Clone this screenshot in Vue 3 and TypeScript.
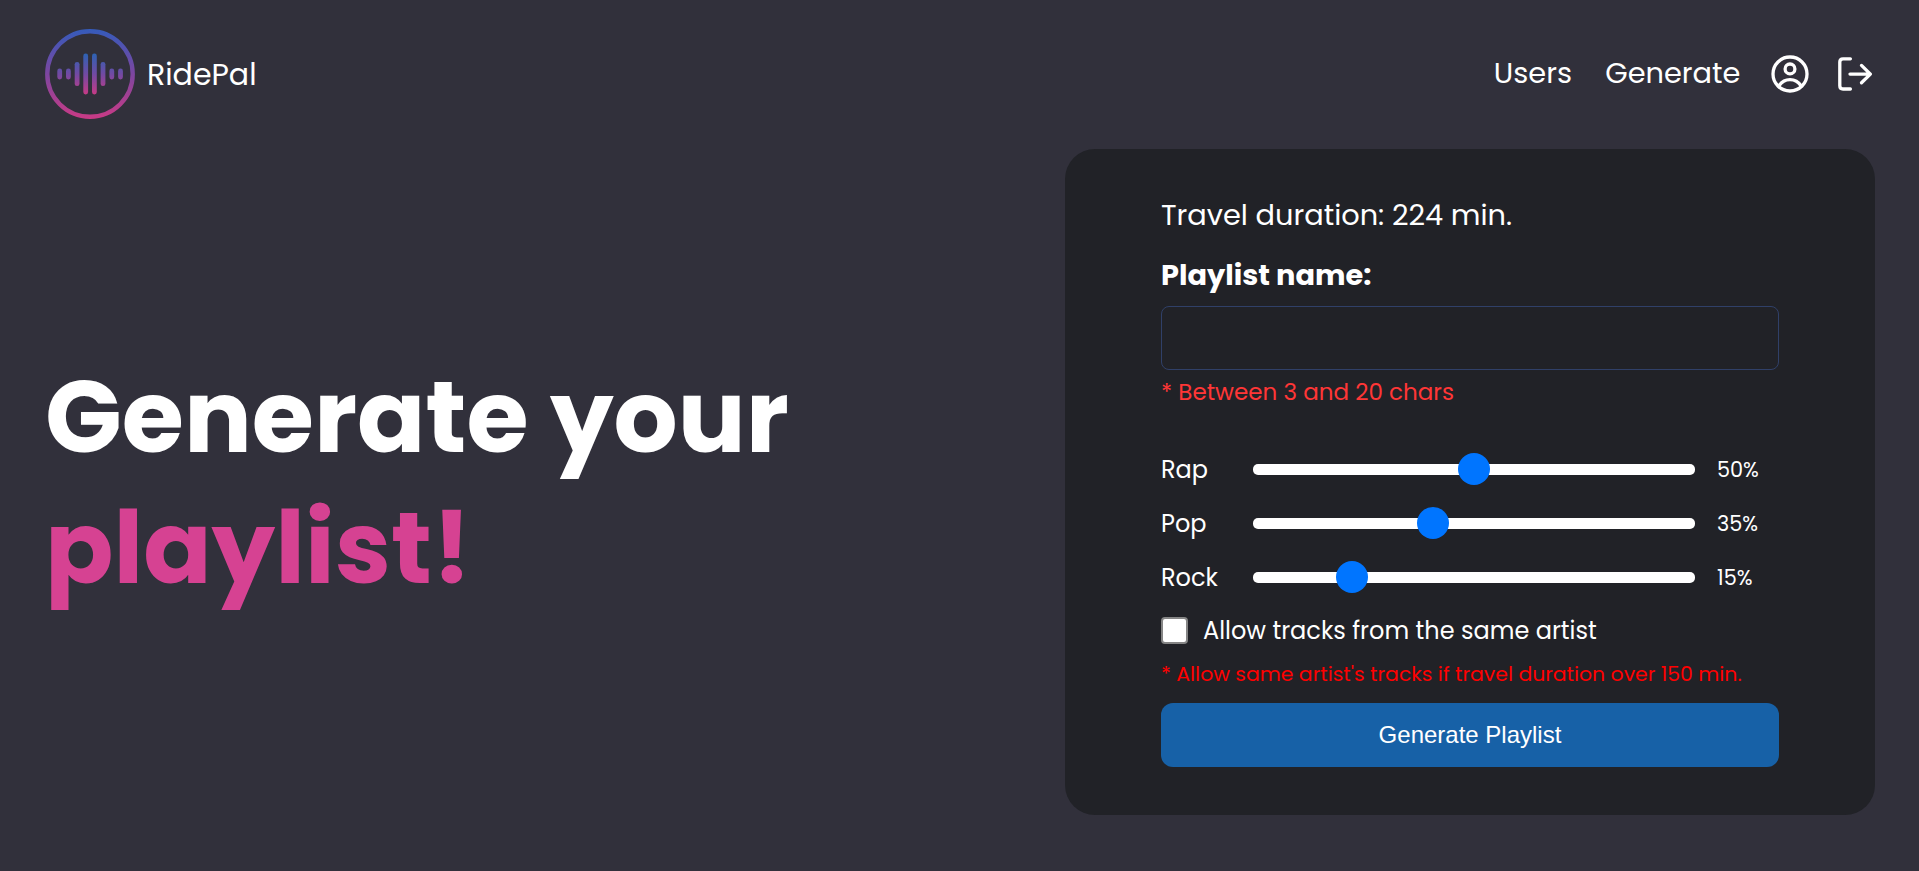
<script setup lang="ts">
import { ref } from 'vue'

interface Genre {
  id: string
  name: string
  share: number
  position: number
}

const duration = 224
const durationLimit = 150
const playlistName = ref('')
const allowSameArtist = ref(false)

const genres = ref<Genre[]>([
  { id: 'rap', name: 'Rap', share: 50, position: 50 },
  { id: 'pop', name: 'Pop', share: 35, position: 40.1 },
  { id: 'rock', name: 'Rock', share: 15, position: 20.15 },
])

const waveBars = [
  { x: 14.7, h: 5.4 },
  { x: 23.4, h: 5.4 },
  { x: 32.1, h: 12 },
  { x: 40.7, h: 20.4 },
  { x: 49.4, h: 20.4 },
  { x: 58, h: 12 },
  { x: 66.8, h: 5.4 },
  { x: 75.5, h: 5.4 },
]
</script>

<template>
  <div class="page">
    <header class="header">
      <div class="brand">
        <svg class="logo" viewBox="0 0 90 90">
          <defs>
            <linearGradient id="ring" gradientUnits="userSpaceOnUse" x1="0" y1="0" x2="0" y2="90">
              <stop offset="0" stop-color="#355bbb" />
              <stop offset="0.5" stop-color="#7d46a0" />
              <stop offset="1" stop-color="#c93a85" />
            </linearGradient>
            <linearGradient id="wave" gradientUnits="userSpaceOnUse" x1="0" y1="24" x2="0" y2="66">
              <stop offset="0" stop-color="#2a63b4" />
              <stop offset="0.5" stop-color="#714aa3" />
              <stop offset="1" stop-color="#c93a85" />
            </linearGradient>
          </defs>
          <circle cx="45" cy="45" r="42.7" fill="none" stroke="url(#ring)" stroke-width="4.4" />
          <rect
            v-for="bar in waveBars"
            :key="bar.x"
            :x="bar.x - 2.4"
            :y="45 - bar.h"
            width="4.8"
            :height="bar.h * 2"
            rx="2.3"
            fill="url(#wave)"
          />
        </svg>
        <span class="brand-name">RidePal</span>
      </div>
      <nav class="nav">
        <a class="link users">Users</a>
        <a class="link generate">Generate</a>
        <svg class="icon profile" viewBox="0 0 38 38">
          <circle cx="19" cy="19" r="17" />
          <circle cx="19" cy="13.9" r="4.9" />
          <path d="M7.8 31 C10.6 26.6 14.6 24.6 19 24.6 S27.4 26.6 30.2 31" />
        </svg>
        <svg class="icon logout" viewBox="0 0 36 36">
          <path d="M13.4 2.8 H6 Q2.8 2.8 2.8 6 V29.8 Q2.8 33 6 33 H13.4" />
          <path d="M13 18.1 H33.4 M24.5 9.4 L33.4 18.1 L24.5 26.8" />
        </svg>
      </nav>
    </header>

    <main class="main">
      <h1 class="title">
        <span>Generate your</span>
        <span class="title-accent">playlist!</span>
      </h1>

      <form class="card" @submit.prevent>
        <p class="duration">Travel duration: {{ duration }} min.</p>
        <label class="name-label" for="name">Playlist name:</label>
        <input id="name" v-model="playlistName" class="name-input" type="text" />
        <p class="name-hint">* Between 3 and 20 chars</p>

        <div class="genres">
          <div v-for="genre in genres" :key="genre.id" class="genre">
            <span class="genre-name">{{ genre.name }}</span>
            <input v-model.number="genre.position" class="slider" type="range" min="0" max="100" step="any" />
            <span class="share">{{ genre.share }}%</span>
          </div>
        </div>

        <label class="allow">
          <input v-model="allowSameArtist" class="check" type="checkbox" />
          <span class="allow-text">Allow tracks from the same artist</span>
        </label>
        <p class="allow-hint">* Allow same artist's tracks if travel duration over {{ durationLimit }} min.</p>
        <button class="submit" type="submit">Generate Playlist</button>
      </form>
    </main>
  </div>
</template>

<style>
body {
  margin: 0;
  background: #31303b;
}
</style>

<style scoped>
.page {
  box-sizing: border-box;
  width: 100%;
  height: 871px;
  overflow: hidden;
  padding: 0 44px 0 45px;
  background: #31303b;
  color: #fff;
  font-family: Poppins, Inter, 'Noto Sans', sans-serif;
  font-size: 28.8px;
}

.header {
  display: flex;
  justify-content: space-between;
  align-items: center;
  height: 148px;
  margin-bottom: 1px;
}

.brand {
  display: flex;
  align-items: center;
}

.logo {
  width: 90px;
  height: 90px;
}

.brand-name {
  margin-left: 12px;
  padding-top: 1px;
  font-size: 30px;
  line-height: 44px;
}

.nav {
  display: flex;
  align-items: center;
}

.link {
  padding-bottom: 2px;
  line-height: 44px;
}

.generate {
  margin-left: 33.4px;
}

.icon {
  fill: none;
  stroke: #fff;
  stroke-width: 3.3;
  stroke-linecap: round;
  stroke-linejoin: round;
}

.profile {
  width: 38px;
  height: 38px;
  margin-left: 31px;
}

.logout {
  width: 36px;
  height: 36px;
  margin: 0 1.8px 0 27.8px;
}

.main {
  display: flex;
  justify-content: space-between;
  align-items: center;
}

.title {
  display: flex;
  flex-direction: column;
  margin: 0;
  font-size: 100.8px;
  font-weight: 700;
  line-height: 131px;
  white-space: nowrap;
}

.title-accent {
  color: #d64292;
}

.card {
  box-sizing: border-box;
  display: flex;
  flex-direction: column;
  width: 810px;
  height: 666px;
  padding: 44px 96px 48px;
  border-radius: 30px;
  background: #212227;
}

.duration {
  margin: 0;
  line-height: 44px;
}

.name-label {
  margin-top: 16px;
  line-height: 44px;
  font-weight: 700;
}

.name-input {
  box-sizing: border-box;
  height: 64px;
  margin: 9px 0 0;
  padding: 0 16px;
  border: 1px solid #304068;
  border-radius: 8px;
  outline: none;
  background: transparent;
  color: #fff;
  font: inherit;
}

.name-hint {
  margin: 4px 0 0;
  line-height: 36px;
  font-size: 23.04px;
  color: #ff3636;
}

.genres {
  margin-top: 32.6px;
}

.genre {
  display: flex;
  align-items: center;
  height: 53.8px;
}

.genre-name {
  width: 92px;
  font-size: 24px;
}

.slider {
  appearance: none;
  width: 442px;
  height: 11px;
  margin: 0;
  border-radius: 5px;
  outline: none;
  background: #fff;
}

.slider::-webkit-slider-thumb {
  appearance: none;
  width: 32px;
  height: 32px;
  border: 0;
  border-radius: 50%;
  background: #0075ff;
}

.share {
  margin-left: 22px;
  font-size: 20.8px;
}

.allow {
  display: flex;
  align-items: center;
  height: 40px;
  margin-top: 6.4px;
}

.check {
  appearance: none;
  box-sizing: border-box;
  width: 27px;
  height: 27px;
  margin: 0;
  border: 2px solid #858585;
  border-radius: 4px;
  background: #fff;
}

.allow-text {
  margin-left: 15px;
  font-size: 24px;
}

.allow-hint {
  margin: 7.5px 0 0;
  line-height: 32px;
  font-size: 20.4px;
  white-space: nowrap;
  color: #f00;
}

.submit {
  height: 64px;
  margin-top: auto;
  border: 0;
  border-radius: 12px;
  background: #1761a7;
  color: #fff;
  font-family: 'Liberation Sans', Arial, sans-serif;
  font-size: 24px;
}
</style>
